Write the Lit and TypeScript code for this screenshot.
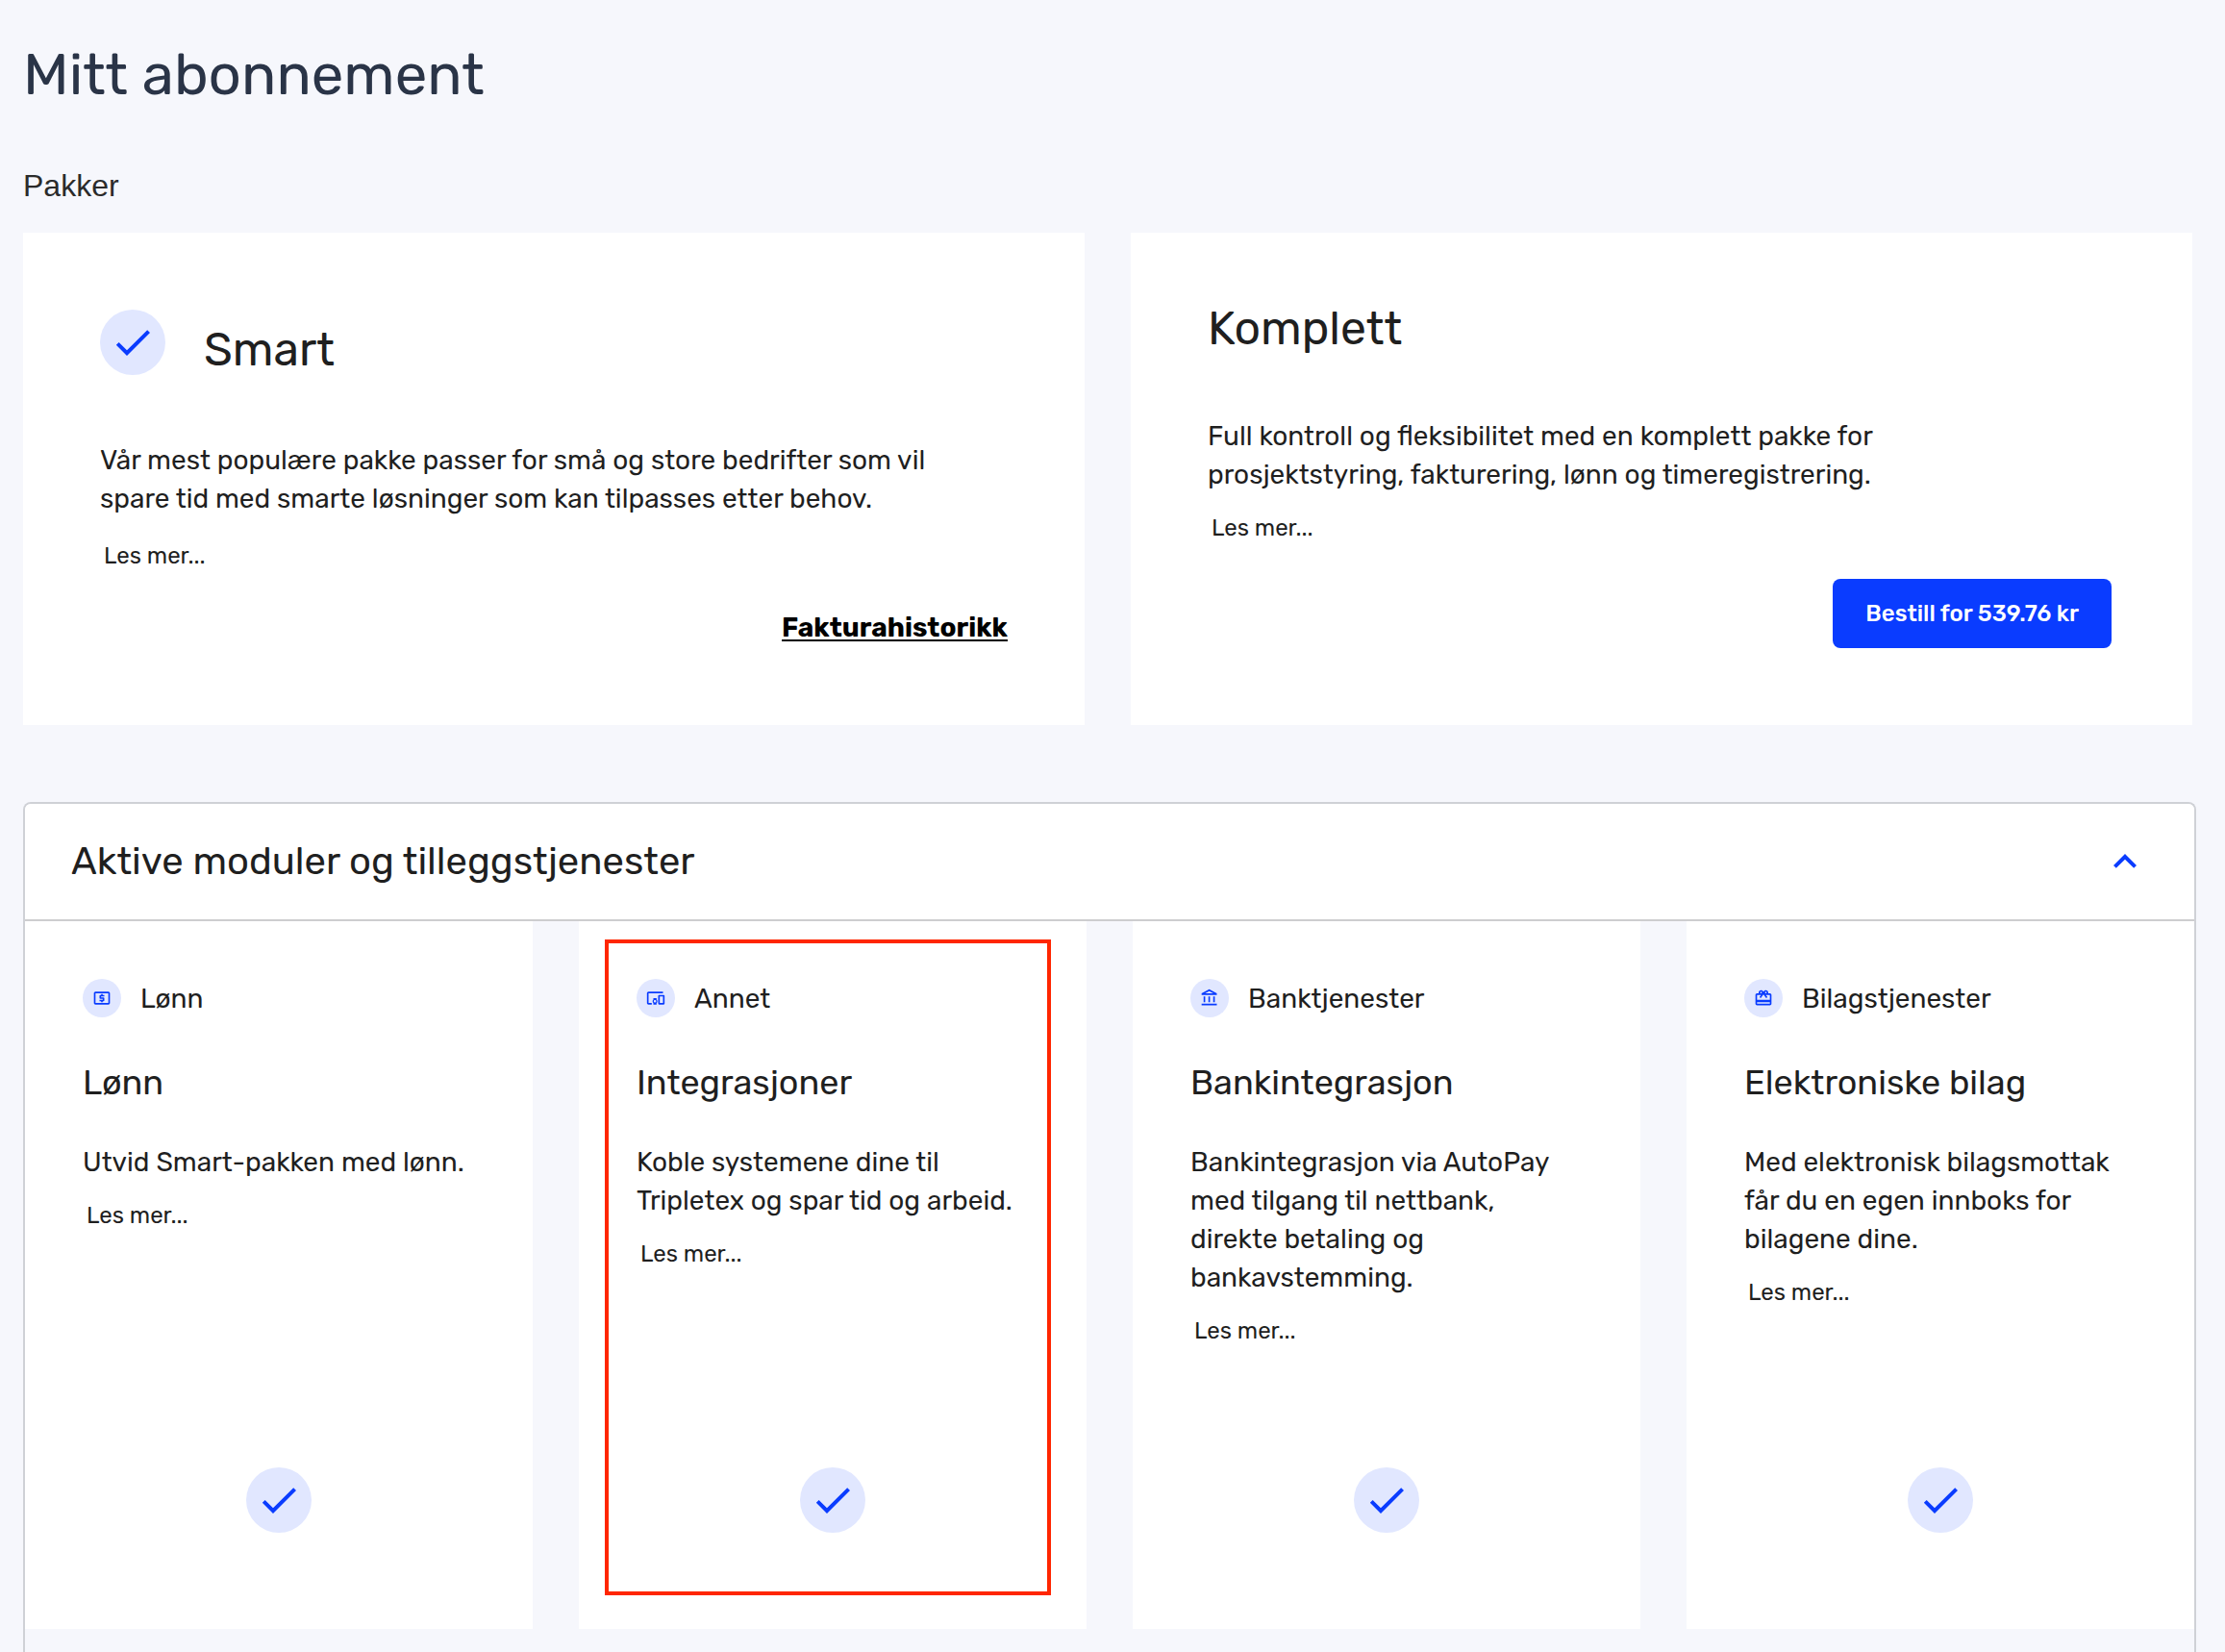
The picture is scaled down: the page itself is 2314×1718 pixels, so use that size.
import { LitElement, html, css, svg, nothing } from "lit";
import { customElement, property, state } from "lit/decorators.js";

const ICONS: Record<string, string> = {
  check: "M9 16.17 4.83 12l-1.42 1.41L9 19 21 7l-1.41-1.41z",
  collapse: "M12 8l-6 6 1.41 1.41L12 10.83l4.59 4.58L18 14z",
  expand: "M16.59 8.59 12 13.17 7.41 8.59 6 10l6 6 6-6z",
  payroll:
    "M11 17h2v-1h1c.55 0 1-.45 1-1v-3c0-.55-.45-1-1-1h-3v-1h4V8h-2V7h-2v1h-1c-.55 0-1 .45-1 1v3c0 .55.45 1 1 1h3v1H9v2h2v1zm9-13H4c-1.11 0-1.99.89-1.99 2L2 18c0 1.11.89 2 2 2h16c1.11 0 2-.89 2-2V6c0-1.11-.89-2-2-2zm0 14H4V6h16v12z",
  devices:
    "M3 6h18V4H3c-1.1 0-2 .9-2 2v12c0 1.1.9 2 2 2h4v-2H3V6zm10 6H9v1.78c-.61.55-1 1.33-1 2.22s.39 1.67 1 2.22V20h4v-1.78c.61-.55 1-1.34 1-2.22s-.39-1.67-1-2.22V12zm-2 5.5c-.83 0-1.5-.67-1.5-1.5s.67-1.5 1.5-1.5 1.5.67 1.5 1.5-.67 1.5-1.5 1.5zM22 8h-6c-.5 0-1 .5-1 1v10c0 .5.5 1 1 1h6c.5 0 1-.5 1-1V9c0-.5-.5-1-1-1zm-1 10h-4v-8h4v8z",
  bank:
    "M6.5 10h-2v7h2v-7zm6 0h-2v7h2v-7zm8.5 9H2v2h19v-2zm-2.5-9h-2v7h2v-7zm-7-6.74L16.71 6H6.29l5.21-2.74m0-2.26L2 6v2h19V6l-9.5-5z",
  gift:
    "M20 6h-2.18c.11-.31.18-.65.18-1 0-1.66-1.34-3-3-3-1.05 0-1.96.54-2.5 1.35l-.5.67-.5-.68C10.96 2.54 10.05 2 9 2 7.34 2 6 3.34 6 5c0 .35.07.69.18 1H4c-1.11 0-1.99.89-1.99 2L2 19c0 1.11.89 2 2 2h16c1.11 0 2-.89 2-2V8c0-1.11-.89-2-2-2zm-5-2c.55 0 1 .45 1 1s-.45 1-1 1-1-.45-1-1 .45-1 1-1zM9 4c.55 0 1 .45 1 1s-.45 1-1 1-1-.45-1-1 .45-1 1-1zm11 15H4v-2h16v2zm0-5H4V8h5.08L7 10.83 8.62 12 11 8.76l1-1.36 1 1.36L15.38 12 17 10.83 14.92 8H20v6z",
};

const icon = (name: string, size: number) => html`
  <svg class="icon" width=${size} height=${size} viewBox="0 0 24 24" aria-hidden="true">
    ${svg`<path d=${ICONS[name]}></path>`}
  </svg>
`;

const shared = css`
  :host {
    display: block;
    box-sizing: border-box;
    color: #1f1f1f;
    font-family: Rubik, Roboto, "Liberation Sans", sans-serif;
  }
  h1,
  h2,
  h3,
  p {
    margin: 0;
    font-weight: 400;
  }
  button {
    margin: 0;
    border: 0;
    background: none;
    color: inherit;
    font-family: inherit;
    cursor: pointer;
  }
  .icon {
    display: block;
    fill: #0a3cff;
  }
  .badge {
    display: flex;
    flex: none;
    align-items: center;
    justify-content: center;
    width: 68px;
    height: 68px;
    border-radius: 50%;
    background: #e1e7ff;
  }
  .badge.small {
    width: 40px;
    height: 40px;
  }
  .text {
    font-size: 28px;
    line-height: 40px;
    white-space: pre-line;
  }
  .more {
    align-self: flex-start;
    margin-top: 19px;
    padding: 0 4px;
    font-size: 24px;
    line-height: 32px;
  }
`;

@customElement("package-card")
class PackageCard extends LitElement {
  @property() name = "";
  @property() text = "";
  @property() price = "";
  @property({ type: Boolean }) active = false;

  static styles = [
    shared,
    css`
      :host {
        display: flex;
        flex-direction: column;
        padding: 72px 80px 79px;
        background: #fff;
      }
      .head {
        display: flex;
        gap: 40px;
        margin-bottom: 64px;
      }
      .head.active {
        margin-bottom: 67px;
        padding-top: 8px;
      }
      .name {
        font-size: 48px;
        line-height: 56px;
      }
      .active .name {
        margin-top: 14px;
      }
      .more.active {
        margin-top: 23px;
      }
      .foot {
        display: flex;
        justify-content: flex-end;
        margin-top: 37px;
      }
      .history {
        color: #000;
        font-size: 28px;
        font-weight: 700;
        line-height: 44px;
        text-decoration: underline;
        text-underline-offset: 3px;
        text-decoration-thickness: 2px;
      }
      .order {
        margin-right: 4px;
        padding: 0 34px;
        border-radius: 8px;
        background: #0a3cff;
        color: #fff;
        font-size: 24px;
        font-weight: 500;
        line-height: 72px;
      }
    `,
  ];

  render() {
    const mode = this.active ? "active" : "";
    return html`
      <div class="head ${mode}">
        ${this.active ? html`<span class="badge">${icon("check", 48)}</span>` : nothing}
        <h3 class="name">${this.name}</h3>
      </div>
      <p class="text">${this.text}</p>
      <button class="more ${mode}" type="button">Les mer...</button>
      <div class="foot">
        ${this.active
          ? html`<a class="history" href="#fakturahistorikk">Fakturahistorikk</a>`
          : html`<button class="order" type="button">Bestill for ${this.price} kr</button>`}
      </div>
    `;
  }
}

@customElement("module-card")
class ModuleCard extends LitElement {
  @property() icon = "";
  @property() category = "";
  @property() name = "";
  @property() text = "";
  @property({ type: Boolean }) marked = false;

  static styles = [
    shared,
    css`
      :host {
        position: relative;
        display: flex;
        flex-direction: column;
        padding: 60px 48px 100px 60px;
        background: #fff;
      }
      .category {
        display: flex;
        gap: 20px;
        font-size: 28px;
        line-height: 42px;
      }
      .name {
        margin: 42px 0 39px;
        font-size: 36px;
        line-height: 48px;
      }
      .status {
        display: flex;
        justify-content: center;
        margin-top: auto;
        padding: 126px 12px 0 0;
      }
      .marker {
        position: absolute;
        inset: 19px 37px 35px 27px;
        border: 4px solid #ff2600;
        pointer-events: none;
      }
    `,
  ];

  render() {
    return html`
      <div class="category">
        <span class="badge small">${icon(this.icon, 20)}</span>
        <span>${this.category}</span>
      </div>
      <h3 class="name">${this.name}</h3>
      <p class="text">${this.text}</p>
      <button class="more" type="button">Les mer...</button>
      <div class="status"><span class="badge">${icon("check", 48)}</span></div>
      ${this.marked ? html`<div class="marker"></div>` : nothing}
    `;
  }
}

@customElement("app-root")
class AppRoot extends LitElement {
  @state() private open = true;

  static styles = [
    shared,
    css`
      :host {
        display: flex;
        flex-direction: column;
        min-height: 100vh;
        padding: 42px 30px 0 24px;
        background: #f6f7fc;
      }
      .title {
        color: #2a3447;
        font-size: 60px;
        line-height: 72px;
      }
      .subtitle {
        margin: 59px 0 29px;
        color: #2b2b2b;
        font-family: Arial, "Liberation Sans", sans-serif;
        font-size: 32px;
        line-height: 40px;
      }
      .packages {
        display: grid;
        grid-template-columns: repeat(2, minmax(0, 1fr));
        gap: 48px;
        margin: 0 4px 80px 0;
      }
      .panel {
        flex: 1;
        border: 2px solid #cfd1d6;
        border-bottom: 0;
        border-radius: 8px 8px 0 0;
      }
      .toggle {
        display: flex;
        align-items: center;
        justify-content: space-between;
        width: 100%;
        padding: 32px 48px;
        border-bottom: 2px solid #cdcdcf;
        border-radius: 6px 6px 0 0;
        background: #fff;
        font-size: 40px;
        line-height: 56px;
        text-align: left;
      }
      .modules {
        display: grid;
        grid-template-columns: repeat(4, minmax(0, 1fr));
        gap: 48px;
      }
    `,
  ];

  render() {
    return html`
      <h1 class="title">Mitt abonnement</h1>
      <h2 class="subtitle">Pakker</h2>
      <section class="packages">
        <package-card
          active
          name="Smart"
          .text=${"Vår mest populære pakke passer for små og store bedrifter som vil\nspare tid med smarte løsninger som kan tilpasses etter behov."}
        ></package-card>
        <package-card
          name="Komplett"
          price="539.76"
          .text=${"Full kontroll og fleksibilitet med en komplett pakke for\nprosjektstyring, fakturering, lønn og timeregistrering."}
        ></package-card>
      </section>
      <section class="panel">
        <h2>
          <button
            class="toggle"
            type="button"
            aria-expanded=${this.open}
            @click=${() => (this.open = !this.open)}
          >
            Aktive moduler og tilleggstjenester ${icon(this.open ? "collapse" : "expand", 48)}
          </button>
        </h2>
        ${this.open
          ? html`<div class="modules">
              <module-card
                icon="payroll"
                category="Lønn"
                name="Lønn"
                text="Utvid Smart-pakken med lønn."
              ></module-card>
              <module-card
                marked
                icon="devices"
                category="Annet"
                name="Integrasjoner"
                .text=${"Koble systemene dine til\nTripletex og spar tid og arbeid."}
              ></module-card>
              <module-card
                icon="bank"
                category="Banktjenester"
                name="Bankintegrasjon"
                .text=${"Bankintegrasjon via AutoPay\nmed tilgang til nettbank,\ndirekte betaling og\nbankavstemming."}
              ></module-card>
              <module-card
                icon="gift"
                category="Bilagstjenester"
                name="Elektroniske bilag"
                .text=${"Med elektronisk bilagsmottak\nfår du en egen innboks for\nbilagene dine."}
              ></module-card>
            </div>`
          : nothing}
      </section>
    `;
  }
}
